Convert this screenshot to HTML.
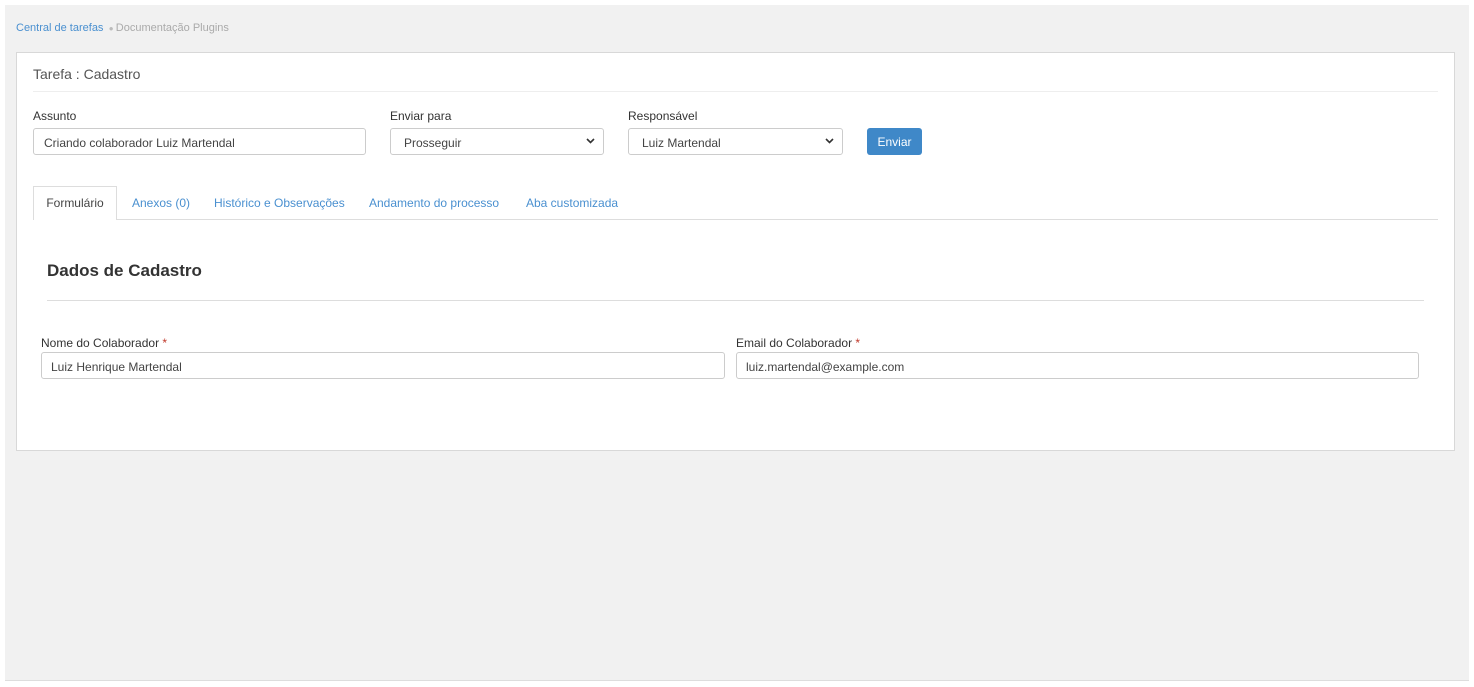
<!DOCTYPE html>
<html><head><meta charset="utf-8"><style>
*{box-sizing:border-box;margin:0;padding:0}
body{width:1474px;height:687px;background:#fff;font-family:"Liberation Sans",sans-serif;color:#333;position:relative;overflow:hidden}
.a{position:absolute;white-space:nowrap}
.bg{left:5px;top:5px;width:1464px;height:676px;background:#f1f1f1;border-bottom:1px solid #ddd}
.panel{left:16px;top:52px;width:1439px;height:399px;background:#fff;border:1px solid #d8d8d8}
.inp{position:absolute;height:27px;border:1px solid #ccc;border-radius:3px;background:#fff;font-size:12px;color:#444;padding:7px 10px;line-height:14px}
.lbl{font-size:12px;color:#333}
.sel svg{position:absolute;right:8px;top:9px}
.tab{font-size:12px;color:#4a90d0}
.star{color:#c0392b}
</style></head><body>
<div class="a bg"></div>
<div class="a" style="left:16px;top:22px;font-size:11px;color:#4a90d0">Central de tarefas <span style="color:#bbb;font-size:8px">&nbsp;●&nbsp;</span><span style="color:#aaa">Documentação Plugins</span></div>
<div class="a panel"></div>
<div class="a" style="left:33px;top:66px;font-size:14px;color:#555">Tarefa : Cadastro</div>
<div class="a" style="left:33px;top:91px;width:1405px;height:1px;background:#eee"></div>
<div class="a lbl" style="left:33px;top:109px">Assunto</div>
<div class="a lbl" style="left:390px;top:109px">Enviar para</div>
<div class="a lbl" style="left:628px;top:109px">Responsável</div>
<div class="inp" style="left:33px;top:128px;width:333px">Criando colaborador Luiz Martendal</div>
<div class="inp sel" style="left:390px;top:128px;width:214px;padding-left:13px">Prosseguir<svg width="9" height="6" viewBox="0 0 9 6"><path d="M1 1l3.5 3.5L8 1" stroke="#333" stroke-width="1.6" fill="none"/></svg></div>
<div class="inp sel" style="left:628px;top:128px;width:215px;padding-left:13px">Luiz Martendal<svg width="9" height="6" viewBox="0 0 9 6"><path d="M1 1l3.5 3.5L8 1" stroke="#333" stroke-width="1.6" fill="none"/></svg></div>
<div class="a" style="left:867px;top:128px;width:55px;height:27px;background:#3f88c8;border-radius:3px;color:#fff;font-size:12px;text-align:center;line-height:28px">Enviar</div>
<div class="a" style="left:33px;top:219px;width:1405px;height:1px;background:#ddd"></div>
<div class="a" style="left:33px;top:186px;width:84px;height:34px;background:#fff;border:1px solid #ddd;border-bottom:none;font-size:12px;color:#444;text-align:center;line-height:33px">Formulário</div>
<div class="a tab" style="left:132px;top:196px">Anexos (0)</div>
<div class="a tab" style="left:214px;top:196px">Histórico e Observações</div>
<div class="a tab" style="left:369px;top:196px">Andamento do processo</div>
<div class="a tab" style="left:526px;top:196px">Aba customizada</div>
<div class="a" style="left:47px;top:261px;font-size:17px;font-weight:bold;color:#333">Dados de Cadastro</div>
<div class="a" style="left:47px;top:300px;width:1377px;height:1px;background:#ddd"></div>
<div class="a lbl" style="left:41px;top:336px">Nome do Colaborador <span class="star">*</span></div>
<div class="a lbl" style="left:736px;top:336px">Email do Colaborador <span class="star">*</span></div>
<div class="inp" style="left:41px;top:352px;width:684px;padding-left:9px">Luiz Henrique Martendal</div>
<div class="inp" style="left:736px;top:352px;width:683px;padding-left:9px">luiz.martendal@example.com</div>
</body></html>
